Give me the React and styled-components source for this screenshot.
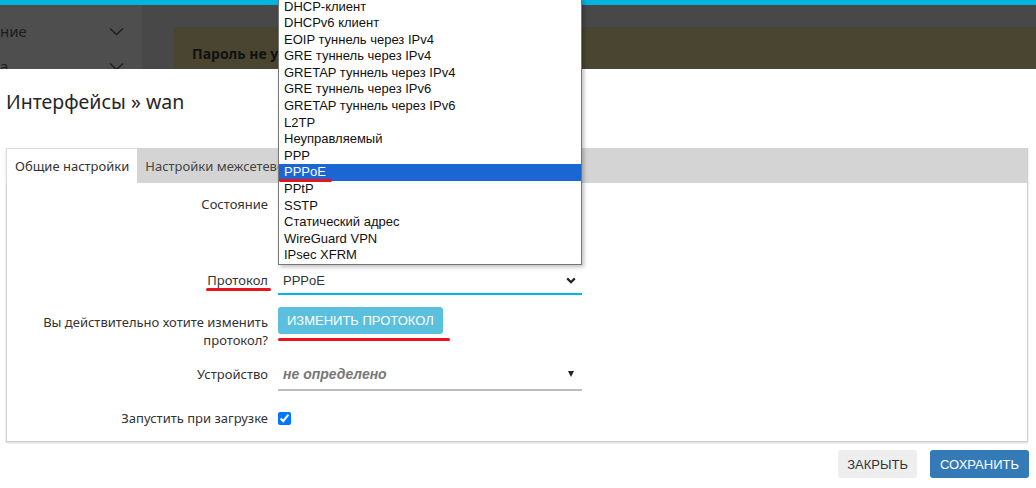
import React from "react";
import styled, { createGlobalStyle, css } from "styled-components";

const GlobalStyle = createGlobalStyle`
  html, body {
    margin: 0;
    padding: 0;
    background: #fff;
  }
  #root {
    width: 1036px;
    height: 488px;
    overflow: hidden;
  }
`;

const protocols = [
    "DHCP-клиент",
    "DHCPv6 клиент",
    "EOIP туннель через IPv4",
    "GRE туннель через IPv4",
    "GRETAP туннель через IPv4",
    "GRE туннель через IPv6",
    "GRETAP туннель через IPv6",
    "L2TP",
    "Неуправляемый",
    "PPP",
    "PPPoE",
    "PPtP",
    "SSTP",
    "Статический адрес",
    "WireGuard VPN",
    "IPsec XFRM",
];

const SmallChevron = () => (
    <svg width="15" height="9" viewBox="0 0 15 9" fill="none">
        <path d="M1 1.5 L7.5 7.5 L14 1.5" stroke="#1e1e1e" strokeWidth="1.4" />
    </svg>
);

const SelectChevron = () => (
    <svg width="10" height="7" viewBox="0 0 10 7" fill="none">
        <path d="M1.2 1.4 L5 5.2 L8.8 1.4" stroke="#222" strokeWidth="2.2" />
    </svg>
);

const App = () => {
    return (
        <>
            <GlobalStyle />
            <Page>
                <Backdrop>
                    <TopLine />
                    <BackRow>
                        <Sidebar>
                            <SideItem>
                                <span>ние</span>
                                <SmallChevron />
                            </SideItem>
                            <SideItem>
                                <span>а</span>
                                <SmallChevron />
                            </SideItem>
                        </Sidebar>
                        <Main>
                            <Alert>Пароль не установлен</Alert>
                        </Main>
                    </BackRow>
                </Backdrop>

                <Modal>
                    <Title>Интерфейсы » wan</Title>
                    <Panel>
                        <Tabs>
                            <Tab active>Общие настройки</Tab>
                            <Tab>Настройки межсетевого экрана</Tab>
                        </Tabs>
                        <Body>
                            <Row>
                                <Label>Состояние</Label>
                                <StatusBox />
                            </Row>
                            <Row>
                                <Label>
                                    <Marked>Протокол</Marked>
                                </Label>
                                <SelectWrap>
                                    <OptionList>
                                        {protocols.map((p) => (
                                            <Option key={p} selected={p === "PPPoE"}>
                                                {p === "PPPoE" ? <OptionMark>{p}</OptionMark> : p}
                                            </Option>
                                        ))}
                                    </OptionList>
                                    <Select accent="#00b5e2" h={28}>
                                        <SelectValue>PPPoE</SelectValue>
                                        <SelectChevron />
                                    </Select>
                                </SelectWrap>
                            </Row>
                            <Row>
                                <Label top={6}>
                                    Вы действительно хотите изменить
                                    <br />
                                    протокол?
                                </Label>
                                <div>
                                    <ButtonMark>
                                        <InfoButton>Изменить протокол</InfoButton>
                                    </ButtonMark>
                                </div>
                            </Row>
                            <Row>
                                <Label>Устройство</Label>
                                <Select accent="#bdbdbd" h={30} bottom={2}>
                                    <Placeholder>не определено</Placeholder>
                                    <Triangle />
                                </Select>
                            </Row>
                            <Row>
                                <Label top={6}>Запустить при загрузке</Label>
                                <CheckCell>
                                    <Checkbox type="checkbox" defaultChecked />
                                </CheckCell>
                            </Row>
                        </Body>
                    </Panel>
                    <Footer>
                        <FooterButton>Закрыть</FooterButton>
                        <FooterButton primary>Сохранить</FooterButton>
                    </Footer>
                </Modal>
            </Page>
        </>
    );
};

const Page = styled.div`
    position: relative;
    display: flex;
    flex-direction: column;
    width: 1036px;
    height: 488px;
    font-family: "Noto Sans", "Open Sans", sans-serif;
    color: #333;
`;

const Backdrop = styled.div`
    height: 69px;
    display: flex;
    flex-direction: column;
    background: #484848;
`;

const TopLine = styled.div`
    height: 5px;
    flex-shrink: 0;
    background: #00b4e0;
`;

const BackRow = styled.div`
    flex: 1;
    display: flex;
`;

const Sidebar = styled.div`
    width: 142px;
    background: #4e4e4e;
    display: flex;
    flex-direction: column;
    gap: 17px;
    padding: 17px 18px 0 0;
    box-sizing: border-box;
    overflow: hidden;
`;

const SideItem = styled.div`
    display: flex;
    align-items: center;
    justify-content: space-between;
    height: 18px;
    font-size: 15px;
    line-height: 18px;
    color: #1c1c1c;
`;

const Main = styled.div`
    flex: 1;
    display: flex;
    flex-direction: column;
    justify-content: flex-end;
    padding-left: 32px;
`;

const Alert = styled.div`
    height: 48px;
    box-sizing: border-box;
    background: #4a4530;
    padding: 18px 0 0 18px;
    font-size: 14px;
    line-height: 18px;
    font-weight: 700;
    color: #111;
    white-space: nowrap;
    overflow: hidden;
`;

const Modal = styled.div`
    flex: 1;
    background: #fff;
    display: flex;
    flex-direction: column;
    padding: 0 8px 0 6px;
`;

const Title = styled.h3`
    margin: 21px 0 34px;
    font-size: 19.5px;
    line-height: 24px;
    font-weight: 400;
    color: #262626;
`;

const Panel = styled.div`
    border: 1px solid #d0d0d0;
    box-shadow: 0 1px 2px rgba(0, 0, 0, 0.18);
`;

const Tabs = styled.div`
    display: flex;
    height: 35px;
    background: #d4d4d4;
    margin: -1px 0 0 -1px;
`;

const Tab = styled.div`
    display: flex;
    align-items: center;
    padding: 0 8px;
    font-size: 13px;
    white-space: nowrap;
    color: #444;
    ${(p) =>
        p.active &&
        css`
            background: #fff;
            color: #333;
            border-top: 1px solid #ddd;
            border-left: 1px solid #ddd;
        `}
`;

const Body = styled.div`
    display: flex;
    flex-direction: column;
    gap: 12px;
    padding: 8px 0;
`;

const Row = styled.div`
    display: grid;
    grid-template-columns: 261px 304px;
    column-gap: 10px;
    align-items: start;
`;

const Label = styled.div`
    padding-top: ${(p) => p.top ?? 4}px;
    text-align: right;
    font-size: 13px;
    line-height: 18px;
    color: #333;
`;

const Marker = css`
    content: "";
    position: absolute;
    height: 3px;
    border-radius: 2px;
    background: #e8141c;
`;

const Marked = styled.span`
    position: relative;
    &::after {
        ${Marker}
        left: -1px;
        right: -3px;
        bottom: -2px;
    }
`;

const StatusBox = styled.div`
    height: 64px;
`;

const SelectWrap = styled.div`
    position: relative;
`;

const OptionList = styled.ul`
    position: absolute;
    left: 0;
    bottom: calc(100% + 2px);
    width: 304px;
    margin: 0;
    padding: 0;
    list-style: none;
    box-sizing: border-box;
    background: #fff;
    border: 1px solid #767676;
    box-shadow: 2px 2px 4px rgba(0, 0, 0, 0.25);
    z-index: 2;
`;

const Option = styled.li`
    height: 16.6px;
    line-height: 16.6px;
    padding-left: 5px;
    font-family: "Liberation Sans", Arial, sans-serif;
    font-size: 13px;
    color: #111;
    white-space: nowrap;
    ${(p) =>
        p.selected &&
        css`
            background: #1a66d2;
            color: #fff;
        `}
`;

const OptionMark = styled.span`
    position: relative;
    &::after {
        ${Marker}
        left: -5px;
        right: -6px;
        bottom: -3px;
    }
`;

const Select = styled.div`
    height: ${(p) => p.h}px;
    box-sizing: border-box;
    display: flex;
    align-items: center;
    justify-content: space-between;
    padding: 0 6px ${(p) => p.bottom ?? 0}px 5px;
    border-bottom: 2px solid ${(p) => p.accent};
`;

const SelectValue = styled.span`
    font-family: "Liberation Sans", Arial, sans-serif;
    font-size: 13px;
    color: #333;
`;

const Placeholder = styled.span`
    font-family: "Liberation Sans", Arial, sans-serif;
    font-size: 14px;
    font-style: italic;
    font-weight: 700;
    color: #777;
`;

const Triangle = styled.span`
    width: 0;
    height: 0;
    margin-right: 2px;
    border-left: 3.5px solid transparent;
    border-right: 3.5px solid transparent;
    border-top: 6px solid #222;
`;

const ButtonMark = styled.span`
    position: relative;
    display: inline-block;
    &::after {
        ${Marker}
        left: 0;
        right: -7px;
        bottom: -7px;
    }
`;

const InfoButton = styled.button`
    display: block;
    height: 27px;
    padding: 0 9px;
    border: none;
    border-radius: 3px;
    background: #5bc0de;
    color: #fff;
    font-family: "Liberation Sans", Arial, sans-serif;
    font-size: 13px;
    text-transform: uppercase;
    cursor: pointer;
`;

const CheckCell = styled.div`
    height: 30px;
    display: flex;
    align-items: center;
`;

const Checkbox = styled.input`
    width: 13px;
    height: 13px;
    margin: 0;
    accent-color: #0075ff;
`;

const Footer = styled.div`
    display: flex;
    justify-content: flex-end;
    gap: 13px;
    margin: 8px -1px 0 0;
`;

const FooterButton = styled.button`
    height: 28px;
    padding: 0 ${(p) => (p.primary ? 10 : 9)}px;
    border: none;
    border-radius: 3px;
    font-family: "Liberation Sans", Arial, sans-serif;
    font-size: 13px;
    text-transform: uppercase;
    cursor: pointer;
    background: ${(p) => (p.primary ? "#337ab7" : "#eee")};
    color: ${(p) => (p.primary ? "#fff" : "#333")};
`;

export default App;
